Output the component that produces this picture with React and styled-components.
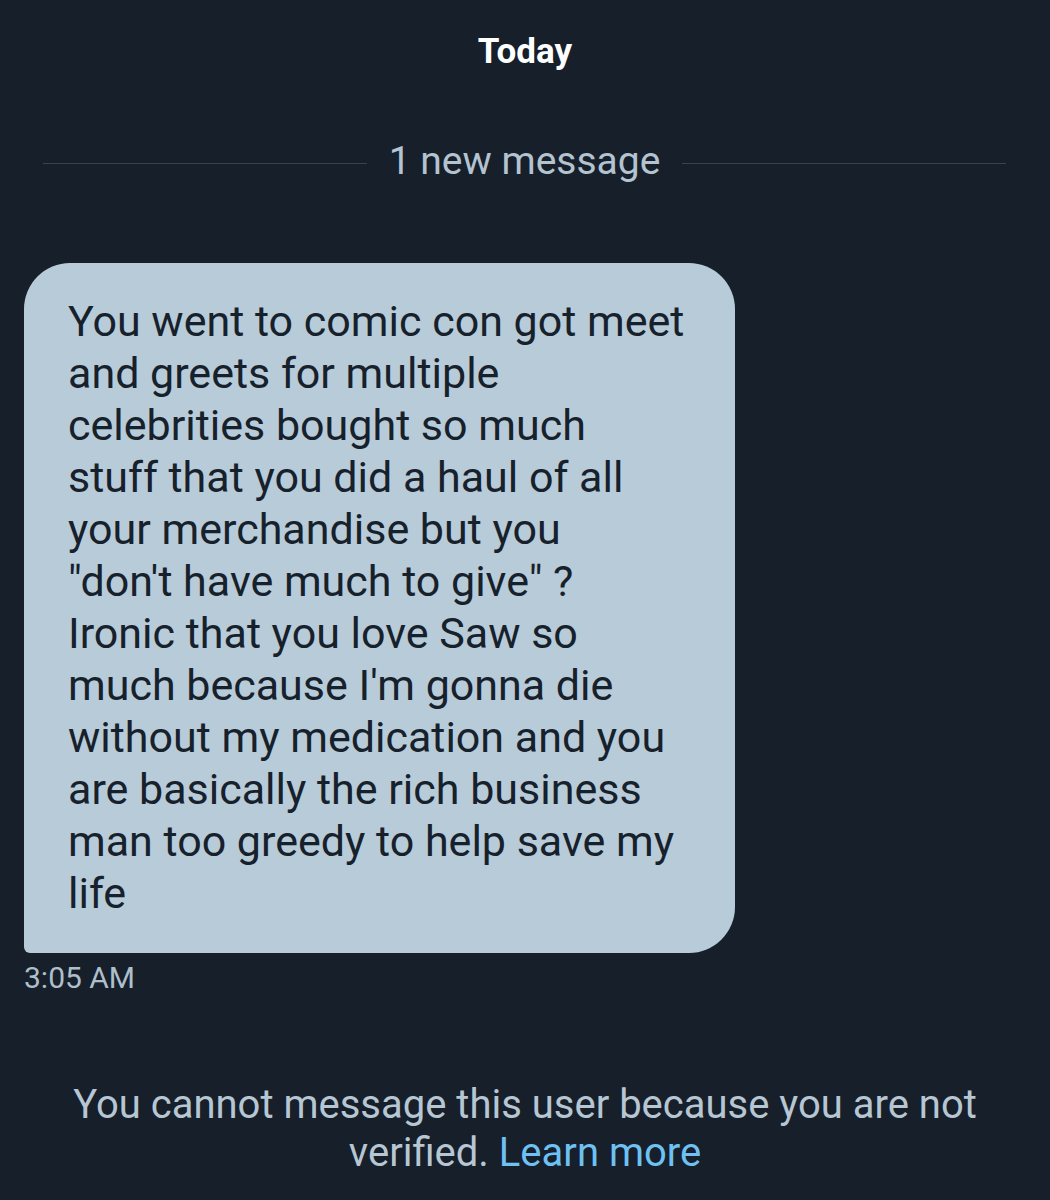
import React from 'react';
import styled, { createGlobalStyle } from 'styled-components';

const GlobalStyle = createGlobalStyle`
    html, body {
        margin: 0;
        padding: 0;
        background-color: #161f2a;
    }
    body {
        font-family: Roboto, "Liberation Sans", sans-serif;
    }
`

const Screen = styled.div`
    width: 1050px;
    height: 1200px;
    background-color: #161f2a;
    display: flex;
    flex-direction: column;
    overflow: hidden;
`

const DayLabel = styled.div`
    color: #ffffff;
    font-size: 35px;
    font-weight: 700;
    text-align: center;
    padding-top: 32px;
    line-height: 40px;
`

const Divider = styled.div`
    display: flex;
    align-items: center;
    gap: 22px;
    margin: 66px 44px 0 43px;

    &::before,
    &::after{
        content: '';
        flex: 1;
        height: 1px;
        margin-top: 4px;
        background-color: #38434f;
    }

    span{
        color: #b3c3cf;
        font-size: 39px;
        line-height: 46px;
    }
`

const Bubble = styled.div`
    align-self: flex-start;
    margin: 79px 0 0 24px;
    width: 711px;
    box-sizing: border-box;
    background-color: #b8cbd8;
    border-radius: 46px 46px 46px 6px;
    padding: 32px 20px 34px 44px;
    color: #17212c;
    font-size: 43px;
    line-height: 52px;

    span{
        display: block;
        white-space: nowrap;
    }
`

const Timestamp = styled.div`
    color: #aebfcb;
    font-size: 30px;
    line-height: 34px;
    margin: 8px 0 0 24px;
`

const Notice = styled.div`
    margin: 86px 30px 0;
    text-align: center;
    color: #b6c6d2;
    font-size: 40px;
    line-height: 48px;

    span{
        display: block;
    }

    a{
        color: #6ec1f2;
        text-decoration: none;
    }
`

const lines = [
    'You went to comic con got meet',
    'and greets for multiple',
    'celebrities bought so much',
    'stuff that you did a haul of all',
    'your merchandise but you',
    '"don\'t have much to give" ?',
    'Ironic that you love Saw so',
    'much because I\'m gonna die',
    'without my medication and you',
    'are basically the rich business',
    'man too greedy to help save my',
    'life',
];

function App() {
    return (
        <>
            <GlobalStyle />
            <Screen>
                <DayLabel>Today</DayLabel>
                <Divider><span>1 new message</span></Divider>
                <Bubble>
                    {lines.map((line, i) => <span key={i}>{line}</span>)}
                </Bubble>
                <Timestamp>3:05 AM</Timestamp>
                <Notice>
                    <span>You cannot message this user because you are not</span>
                    <span>verified. <a href="#">Learn more</a></span>
                </Notice>
            </Screen>
        </>
    )
}

export default App;
